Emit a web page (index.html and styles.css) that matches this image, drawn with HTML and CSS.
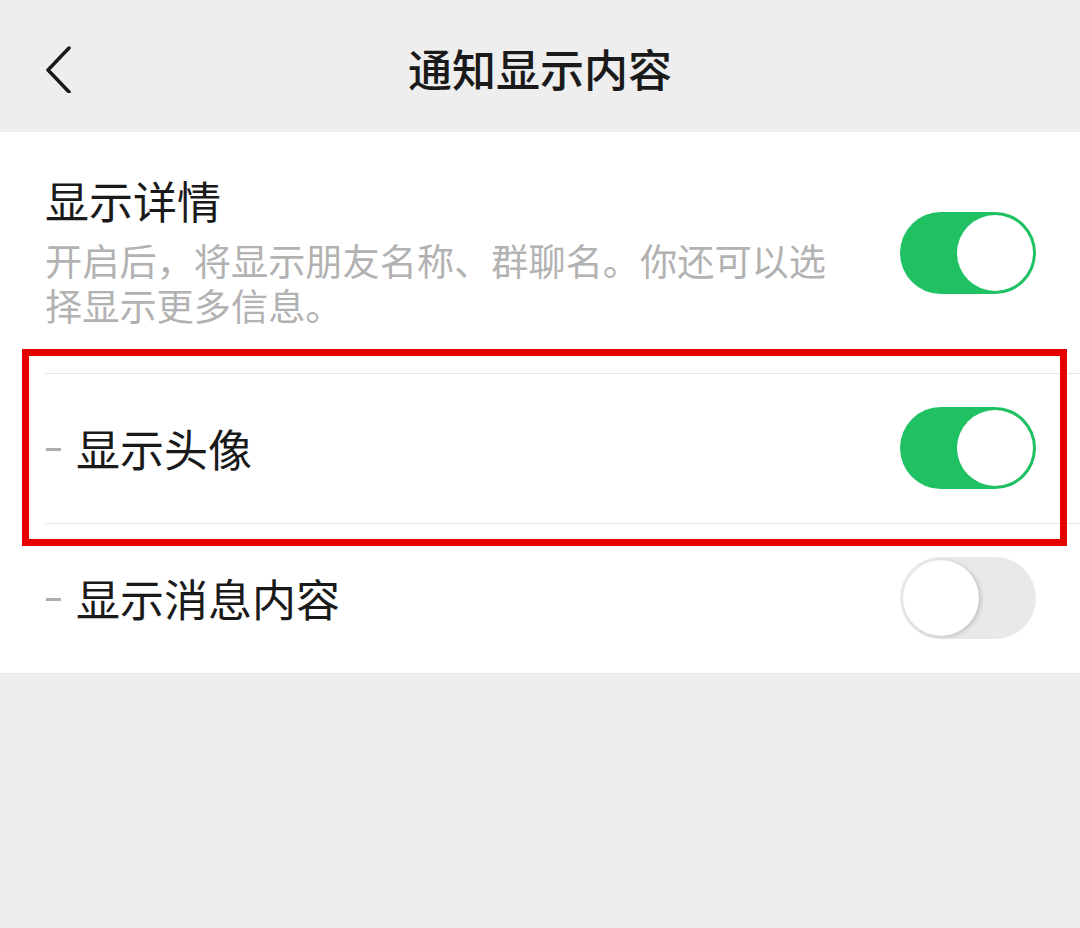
FILE: index.html
```html
<!DOCTYPE html>
<html lang="zh-CN">
<head>
<meta charset="utf-8">
<title>通知显示内容</title>
<link rel="stylesheet" href="styles.css">
</head>
<body>
<div class="page">
  <header class="nav">
    <svg class="back" width="30" height="48" viewBox="0 0 30 48">
      <path d="M26 3 L5 25 L26 47" fill="none" stroke="#1a1a1a" stroke-width="3.5" stroke-linecap="round" stroke-linejoin="round"/>
    </svg>
    <h1 class="title">通知显示内容</h1>
  </header>
  <section class="panel">
    <div class="row row-main">
      <div class="text">
        <div class="label">显示详情</div>
        <div class="desc">开启后，将显示朋友名称、群聊名。你还可以选择显示更多信息。</div>
      </div>
      <div class="switch on"><span class="knob"></span></div>
    </div>
    <div class="row row-sub sep">
      <div class="label sub"><span class="dash"></span>显示头像</div>
      <div class="switch on"><span class="knob"></span></div>
    </div>
    <div class="row row-sub sep">
      <div class="label sub"><span class="dash"></span>显示消息内容</div>
      <div class="switch off"><span class="knob"></span></div>
    </div>
    <div class="highlight"></div>
  </section>
</div>
</body>
</html>
```

FILE: styles.css
```css
* { box-sizing: border-box; }
html, body {
  margin: 0;
  padding: 0;
  background: #eeeeee;
  font-family: "Noto Sans CJK SC", "Noto Sans", sans-serif;
  color: #1a1a1a;
}
.page {
  width: 1080px;
  height: 928px;
  background: #eeeeee;
  overflow: hidden;
}
.nav {
  position: relative;
  height: 132px;
  display: flex;
  align-items: center;
  justify-content: center;
  background: #eeeeee;
}
.back {
  position: absolute;
  left: 43px;
  top: 45px;
}
.title {
  margin: 0;
  font-size: 44px;
  font-weight: 500;
  line-height: 60px;
  margin-top: 4px;
  color: #1a1a1a;
}
.panel {
  position: relative;
  background: #fff;
  border-bottom: 1px solid #e4e4e4;
}
.row {
  display: flex;
  align-items: center;
  justify-content: space-between;
  padding: 0 44px 0 45px;
}
.row-main {
  height: 241px;
}
.row-sub {
  height: 150px;
}
.sep {
  position: relative;
}
.sep::before {
  content: "";
  position: absolute;
  left: 45px;
  right: 0;
  top: 0;
  height: 1px;
  background: #e6e6e6;
}
.text {
  display: flex;
  flex-direction: column;
  margin-top: -8px;
}
.label {
  font-size: 44px;
  line-height: 60px;
  color: #1a1a1a;
}
.label.sub {
  display: flex;
  align-items: center;
}
.desc {
  margin-top: 8px;
  width: 800px;
  font-size: 37.2px;
  line-height: 45px;
  color: #b2b2b2;
}
.dash {
  display: block;
  width: 15px;
  height: 3px;
  background: #adadad;
  margin: 2px 15px 0 1px;
}
.switch {
  position: relative;
  width: 136px;
  height: 82px;
  border-radius: 41px;
  flex: none;
}
.switch.on {
  background: #1fc163;
}
.switch.off {
  background: #e9e9e9;
}
.knob {
  position: absolute;
  top: 3px;
  width: 76px;
  height: 76px;
  border-radius: 50%;
  background: #fff;
}
.switch.on .knob {
  right: 3px;
}
.switch.off .knob {
  left: 3px;
  box-shadow: 2px 1px 4px rgba(0, 0, 0, 0.18);
}
.highlight {
  position: absolute;
  left: 22px;
  top: 217px;
  width: 1045px;
  height: 197px;
  border: 7px solid #e60000;
  pointer-events: none;
}
```
